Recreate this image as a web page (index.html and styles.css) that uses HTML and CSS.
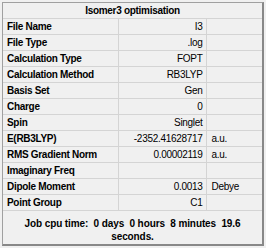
FILE: index.html
```html
<!DOCTYPE html>
<html lang="en">
<head>
	<meta charset="UTF-8" />
	<title>Isomer3 optimisation</title>
	<link rel="stylesheet" href="styles.css">
</head>
<body>
	<div class="panel">
		<table class="summary">
			<colgroup>
				<col class="col-label">
				<col class="col-value">
				<col>
			</colgroup>
			<tr><th class="title" colspan="3">Isomer3 optimisation</th></tr>
			<tr><td class="label">File Name</td><td class="value">I3</td><td class="unit"></td></tr>
			<tr><td class="label">File Type</td><td class="value">.log</td><td class="unit"></td></tr>
			<tr><td class="label">Calculation Type</td><td class="value">FOPT</td><td class="unit"></td></tr>
			<tr><td class="label">Calculation Method</td><td class="value">RB3LYP</td><td class="unit"></td></tr>
			<tr><td class="label">Basis Set</td><td class="value">Gen</td><td class="unit"></td></tr>
			<tr><td class="label">Charge</td><td class="value">0</td><td class="unit"></td></tr>
			<tr><td class="label">Spin</td><td class="value">Singlet</td><td class="unit"></td></tr>
			<tr><td class="label">E(RB3LYP)</td><td class="value">-2352.41628717</td><td class="unit">a.u.</td></tr>
			<tr><td class="label">RMS Gradient Norm</td><td class="value">0.00002119</td><td class="unit">a.u.</td></tr>
			<tr><td class="label">Imaginary Freq</td><td class="value"></td><td class="unit"></td></tr>
			<tr><td class="label">Dipole Moment</td><td class="value">0.0013</td><td class="unit">Debye</td></tr>
			<tr><td class="label">Point Group</td><td class="value">C1</td><td class="unit"></td></tr>
		</table>
		<div class="footer">Job cpu time:&nbsp; 0 days&nbsp; 0 hours&nbsp; 8 minutes&nbsp; 19.6<br>seconds.</div>
	</div>
</body>
</html>
```
FILE: styles.css
```css
body{
	margin:0;
	background-color:#f0f0f0;
	font-family:"Liberation Sans",Arial,sans-serif;
	font-size:10px;
	letter-spacing:-0.3px;
	color:#000;
}
.panel{
	width:262px;
	height:244px;
	margin:2px 0 0 2px;
	border-left:1px solid #a0a0a0;
	border-top:1px solid #a0a0a0;
	border-right:2px solid #888;
	border-bottom:2px solid #888;
	box-sizing:border-box;
}
.summary{
	width:100%;
	border-collapse:collapse;
	table-layout:fixed;
}
.col-label{
	width:115px;
}
.col-value{
	width:88px;
}
.summary td,.summary th{
	height:15px;
	padding:0;
	border-bottom:1px solid #d4d4d4;
	white-space:nowrap;
	overflow:hidden;
}
.title{
	font-weight:bold;
	text-align:center;
	height:14px;
}
.summary .label{
	padding-left:4px;
	font-weight:bold;
	border-right:1px solid #d4d4d4;
}
.summary .value{
	padding-right:3px;
	text-align:right;
	border-right:1px solid #d4d4d4;
}
.summary .unit{
	padding-left:5px;
}
.footer{
	font-weight:bold;
	text-align:center;
	line-height:13px;
	padding-top:6px;
	letter-spacing:-0.1px;
}
```
